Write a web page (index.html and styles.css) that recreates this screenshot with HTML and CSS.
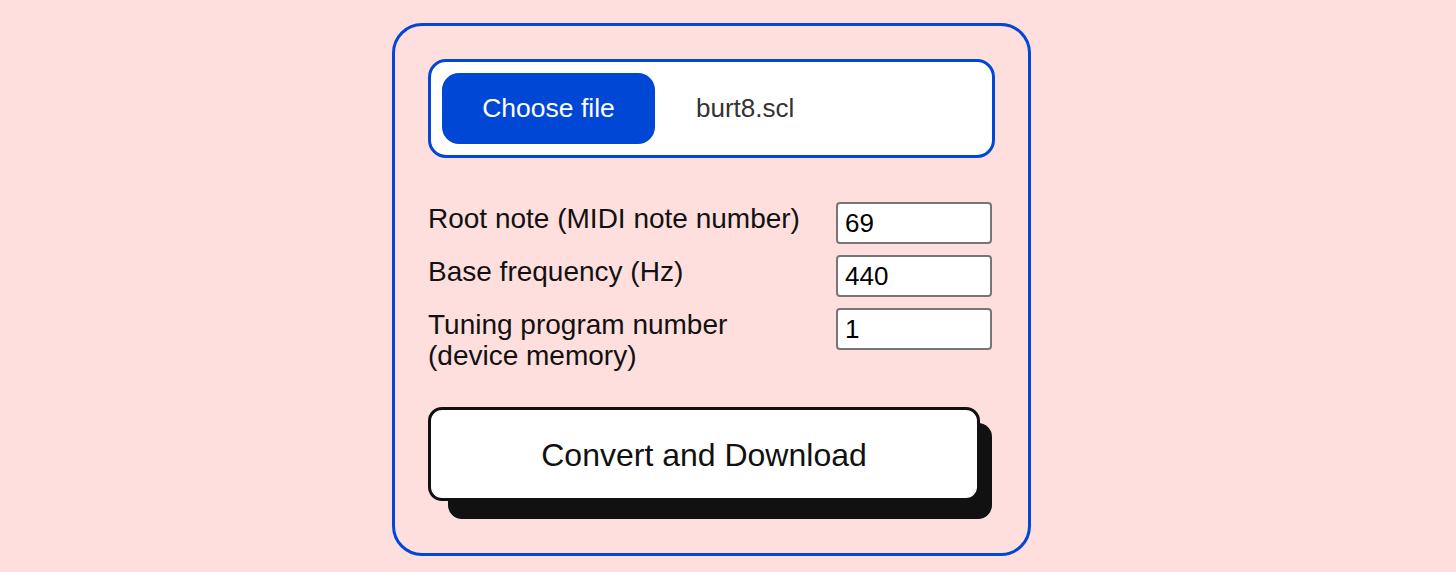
FILE: index.html
```html
<!DOCTYPE html>
<html lang="en">
<head>
<meta charset="utf-8">
<title>Scala to MIDI Tuning Converter</title>
<link rel="stylesheet" href="styles.css">
</head>
<body>
<main class="page">
  <form class="card">
    <div class="file-box">
      <label class="file-btn">Choose file</label>
      <span class="file-name">burt8.scl</span>
    </div>
    <div class="fields">
      <label class="field-label">Root note (MIDI note number)</label>
      <div class="input">69</div>
      <label class="field-label">Base frequency (Hz)</label>
      <div class="input">440</div>
      <label class="field-label">Tuning program number<br>(device memory)</label>
      <div class="input">1</div>
    </div>
    <div class="cta-wrap">
      <button type="button" class="cta">Convert and Download</button>
    </div>
  </form>
</main>
</body>
</html>
```

FILE: styles.css
```css
html, body {
  margin: 0;
  padding: 0;
  background: #ffdfdd;
}
body {
  font-family: "Liberation Sans", Arial, Helvetica, sans-serif;
  color: #111;
}
.page {
  display: flex;
  justify-content: center;
  padding: 23px 33px 0 0;
}
.card {
  width: 567px;
  padding: 33px 33px 33px 33px;
  border: 3px solid #0047d6;
  border-radius: 30px;
  display: flex;
  flex-direction: column;
}
.file-box {
  display: flex;
  align-items: center;
  background: #fff;
  border: 3px solid #0047d6;
  border-radius: 18px;
  padding: 11px;
}
.file-btn {
  width: 213px;
  height: 71px;
  background: #0047d6;
  color: #fff;
  border-radius: 17px;
  display: flex;
  align-items: center;
  justify-content: center;
  font-size: 26.5px;
}
.file-name {
  margin-left: 41px;
  font-size: 26px;
  color: #333;
}
.fields {
  margin-top: 44px;
  display: grid;
  grid-template-columns: 1fr 156px;
  column-gap: 20px;
  row-gap: 11px;
  padding-right: 3px;
}
.field-label {
  font-size: 28px;
  line-height: 31px;
  margin-top: 1px;
}
.input {
  box-sizing: border-box;
  height: 42px;
  border: 2px solid #767676;
  border-radius: 4px;
  background: #fff;
  font-size: 26px;
  line-height: 38px;
  padding-left: 7px;
  color: #000;
}
.cta-wrap {
  position: relative;
  margin-top: 36px;
  margin-bottom: 19px;
  width: 552px;
}
.cta-wrap::before {
  content: "";
  position: absolute;
  left: 20px;
  top: 16px;
  width: 544px;
  height: 96px;
  background: #111;
  border-radius: 14px;
}
.cta {
  position: relative;
  display: block;
  box-sizing: border-box;
  width: 552px;
  height: 94px;
  background: #fff;
  border: 3px solid #111;
  border-radius: 14px;
  font-family: "Liberation Sans", Arial, Helvetica, sans-serif;
  font-size: 32px;
  color: #111;
  padding: 2px 0 0 0;
}
```
